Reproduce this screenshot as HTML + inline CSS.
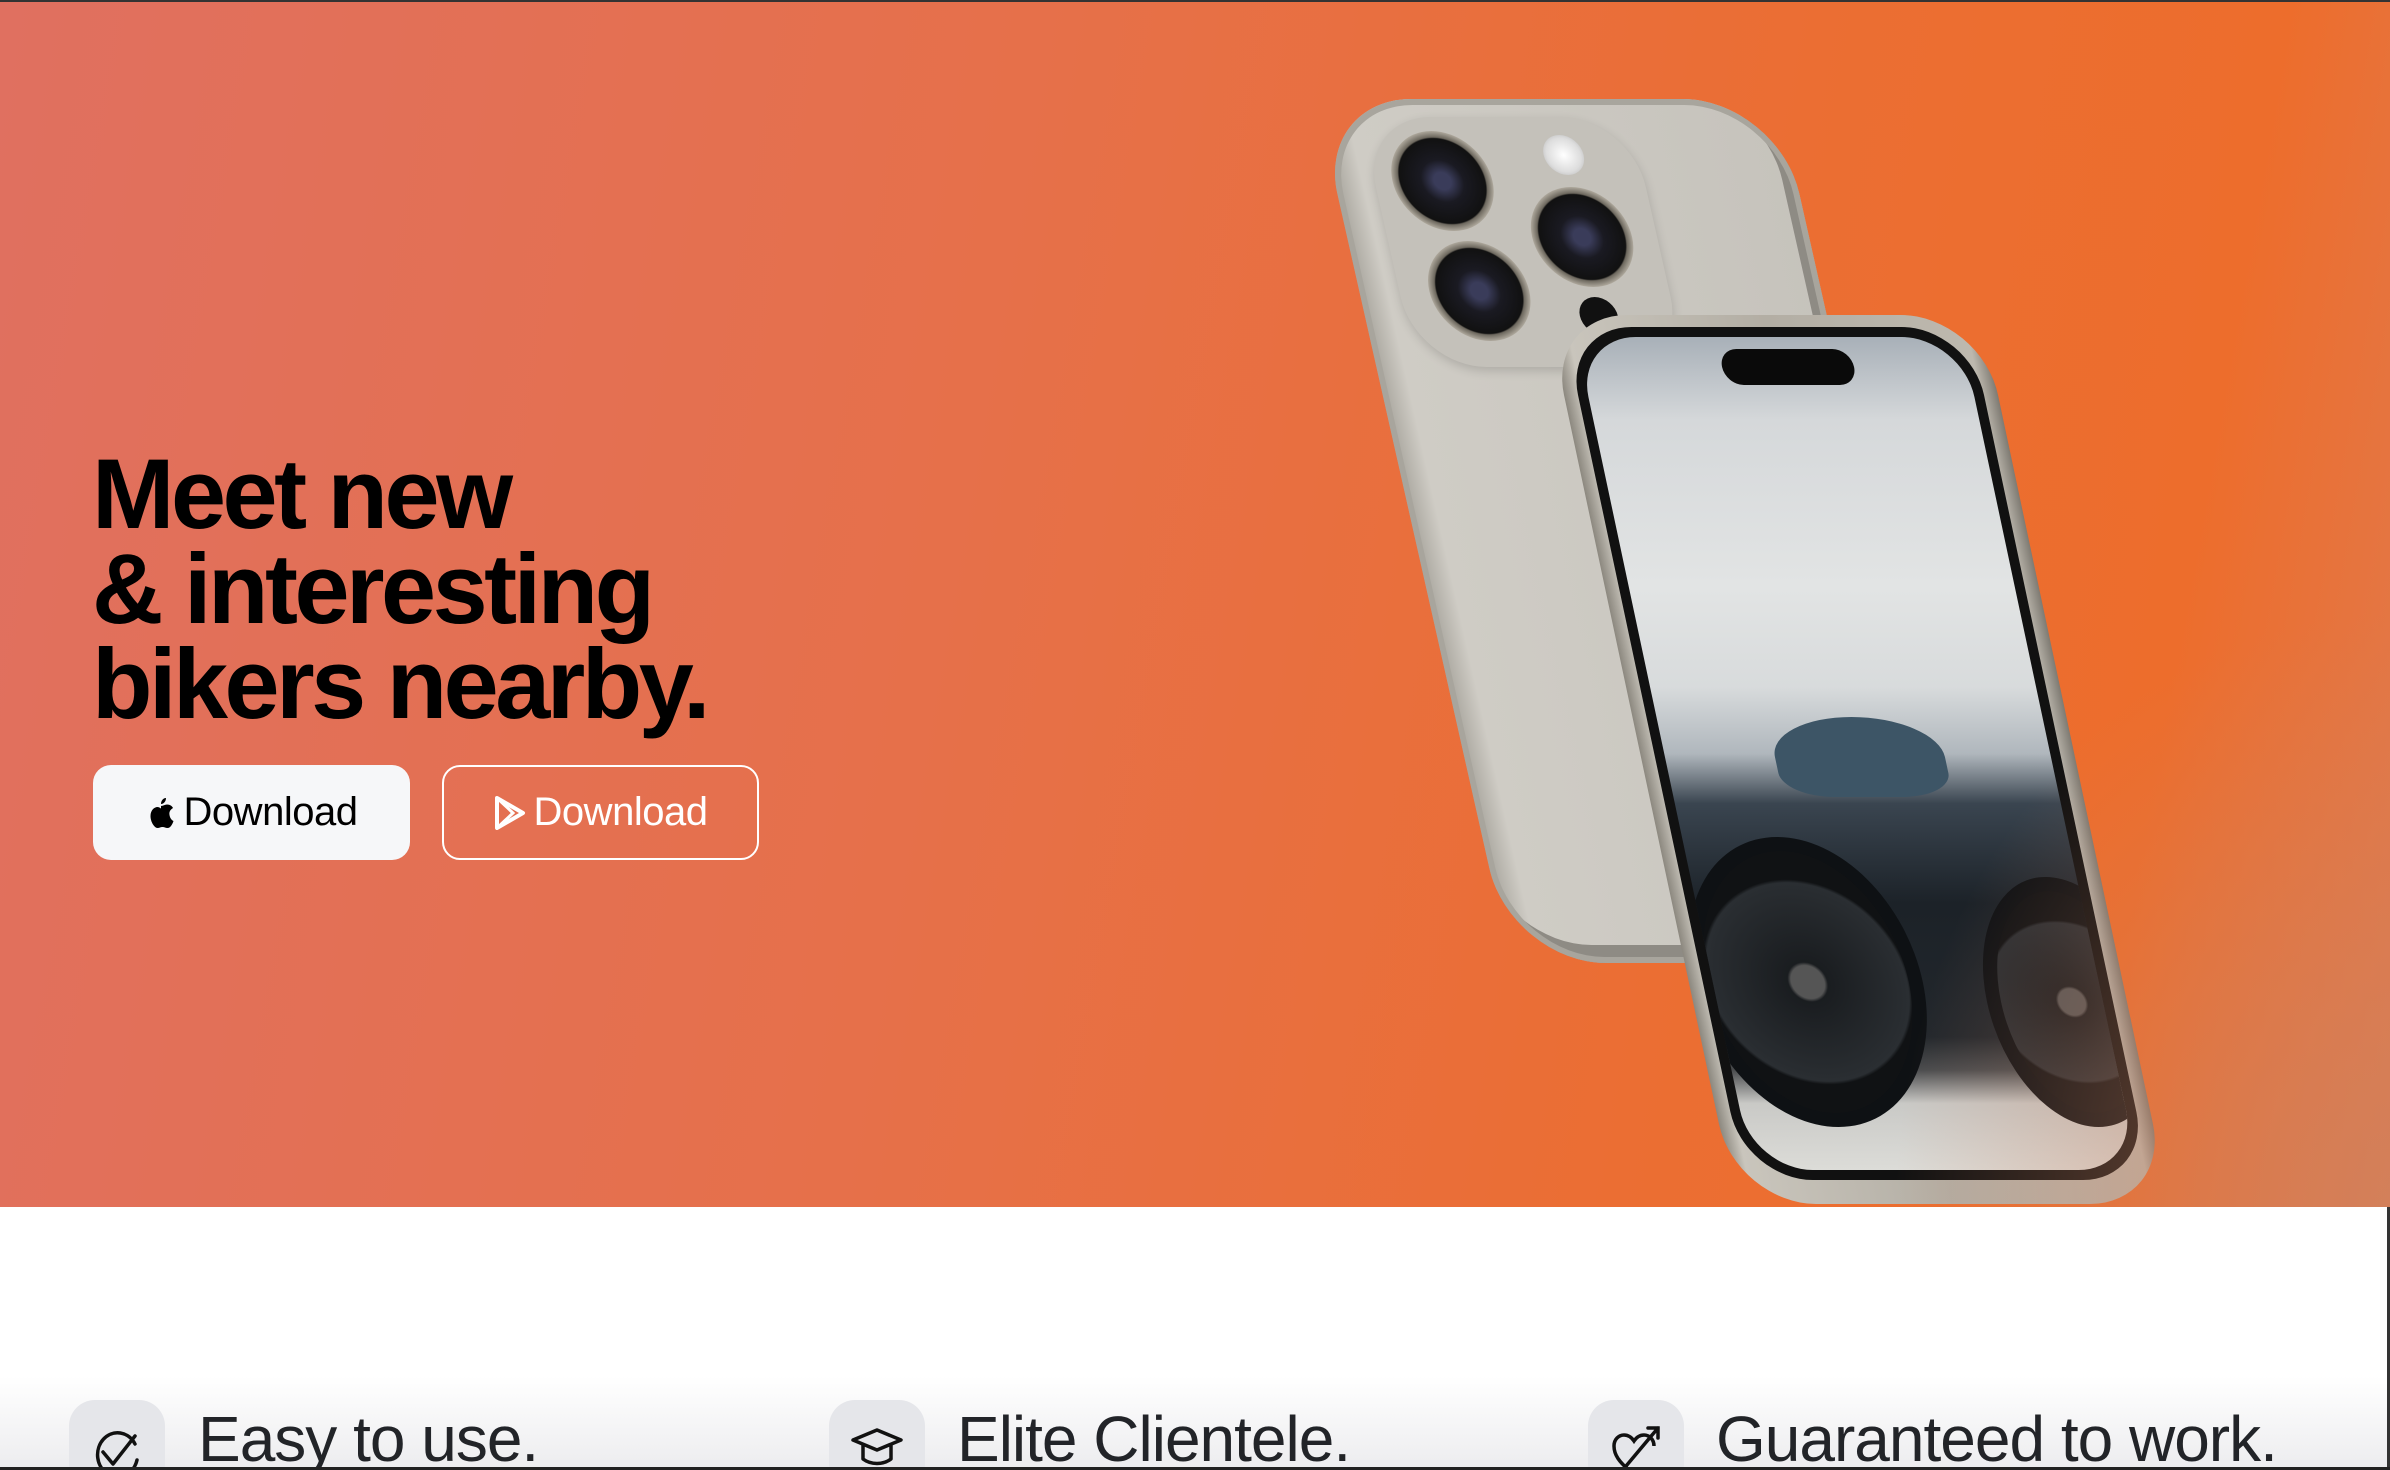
<!DOCTYPE html>
<html><head><meta charset="utf-8"><style>
*{margin:0;padding:0;box-sizing:border-box}
html,body{width:2390px;height:1470px;overflow:hidden;background:#fff;font-family:"Liberation Sans",Arial,sans-serif}
#w{position:relative;width:2390px;height:1470px;overflow:hidden}
.hero{position:absolute;left:0;top:0;width:2390px;height:1207px;background:linear-gradient(100deg,#e07060 0%,#e6704a 40%,#eb6e33 70%,#ed6d2c 88%,#e07a4e 100%);overflow:hidden}
.hero:after{content:"";position:absolute;right:0;bottom:0;width:500px;height:600px;background:radial-gradient(ellipse at 100% 100%,rgba(205,130,95,.7),rgba(205,130,95,0) 70%)}
h1{position:absolute;left:92px;top:446px;font-size:99px;line-height:95px;font-weight:bold;letter-spacing:-3.5px;color:#000}
.btn{position:absolute;top:765px;height:95px;width:317px;border-radius:18px;font-size:40px;display:flex;align-items:center;justify-content:center;gap:8px;letter-spacing:-.5px}
.b1{left:93px;background:#f6f7f9;color:#000}
.b2{left:442px;border:2px solid #fff;color:#fff}
.phone{position:absolute;transform-origin:0 0}
.back{left:1316px;top:99px;width:462px;height:864px;border-radius:95px;background:linear-gradient(90deg,#a9a69e 0%,#cfccc5 6%,#cbc8c1 50%,#c6c3bc 100%);transform:skewX(12.7deg);box-shadow:inset 0 0 0 6px #a8a59d,inset -10px -14px 0 4px #8e8b84}
.cam{position:absolute;left:40px;top:18px;width:270px;height:250px;border-radius:70px;background:#c4c1ba;box-shadow:0 4px 10px rgba(0,0,0,.15)}
.lens{position:absolute;width:100px;height:100px;border-radius:50%;background:radial-gradient(circle,#3a3c5a 0 12%,#1a1a22 30%,#111 60%,#6d685e 62%,#b8b2a6 72%,#6a665e 80%)}
.front{left:1547px;top:315px;width:434px;height:889px;border-radius:80px;background:linear-gradient(90deg,#8c887f,#c9c5bc 4%,#b3aea4 50%,#bdb8ae 96%,#7e7a72);transform:skewX(12deg)}
.scr{position:absolute;left:14px;top:12px;right:14px;bottom:24px;border-radius:68px;background:#111;padding:10px}
.img{position:relative;width:100%;height:100%;border-radius:60px;overflow:hidden;background:linear-gradient(180deg,#a8b0b8 0%,#d5d8da 10%,#e2e4e4 30%,#d8dbdc 42%,#b0b7bd 50%,#3a4550 56%,#1c2228 68%,#22272c 84%,#4a4c4e 88%,#c9c9c6 92%,#dcdcd8 100%)}
.wh{position:absolute;border-radius:50%;border:14px solid #0e1114;background:radial-gradient(circle,#555 0 10%,#1a1d20 12%,#2a2e32 60%,#101214 62%)}
.isl{position:absolute;left:150px;top:22px;width:132px;height:36px;border-radius:18px;background:#0a0a0a}
.sec{position:absolute;left:0;top:1207px;width:2390px;height:263px;background:linear-gradient(180deg,#fff 0%,#fff 65%,#ededef 100%);border-right:3px solid #333;border-bottom:3px solid #222}
.ib{position:absolute;top:1400px;width:96px;height:90px;border-radius:26px;background:#e5e6ea}
.ft{position:absolute;top:1402px;font-size:64px;color:#222428;letter-spacing:-1px;white-space:nowrap}
</style></head><body><div id="w">
<div class="hero">
<h1>Meet new<br>&amp; interesting<br>bikers nearby.</h1>
<div class="btn b1"><svg width="30" height="34" viewBox="0 0 30 34"><path d="M20 2c0 3-2 6-5 6 0-3 2-6 5-6zM15 10c2 0 4-1.5 6-1.5 3 0 5 1.5 6 3.5-3 2-4 4-3.5 7 .5 3 2 5 4 6-1 3-3 7-6 7-2 0-3-1-5-1s-3 1-5 1c-3 0-7-6-7-12 0-6 4-9 7-9 2 0 3 1.5 3.5 1.5z" fill="#000"/></svg>Download</div>
<div class="btn b2"><svg width="32" height="34" viewBox="0 0 32 34"><path d="M3 2l26 15L3 32z" fill="none" stroke="#fff" stroke-width="4" stroke-linejoin="round"/><path d="M3 2l16 15L3 32" fill="none" stroke="#fff" stroke-width="3"/></svg>Download</div>
<div class="phone back"><div class="cam">
<div class="lens" style="left:18px;top:14px"></div>
<div class="lens" style="left:145px;top:70px"></div>
<div class="lens" style="left:30px;top:124px"></div>
<div style="position:absolute;left:175px;top:18px;width:40px;height:40px;border-radius:50%;background:radial-gradient(#fff,#ddd 60%,#aaa)"></div>
<div style="position:absolute;left:175px;top:180px;width:38px;height:38px;border-radius:50%;background:#111"></div>
</div></div>
<div class="phone front"><div class="scr"><div class="img">
<div class="wh" style="left:-20px;top:500px;width:230px;height:290px"></div>
<div class="wh" style="left:270px;top:540px;width:170px;height:250px"></div>
<div style="position:absolute;left:110px;top:380px;width:170px;height:80px;border-radius:50% 50% 30% 30%;background:#3d5566"></div>
</div><div class="isl"></div></div></div>
</div>
<div class="sec"></div>
<div class="ib" style="left:69px"><svg style="position:absolute;left:22px;top:24px" width="52" height="60" viewBox="0 0 52 60"><path d="M44 20A20 22 0 1 0 46 36" fill="none" stroke="#111" stroke-width="3.5" stroke-linecap="round"/><path d="M12 28l10 12L44 12" fill="none" stroke="#111" stroke-width="3.5" stroke-linecap="round" stroke-linejoin="round"/></svg></div>
<div class="ft" style="left:198px">Easy to use.</div>
<div class="ib" style="left:829px"><svg style="position:absolute;left:20px;top:26px" width="56" height="50" viewBox="0 0 56 50"><path d="M4 14L28 4l24 10-24 10z M14 19v14c8 6 20 6 28 0V19" fill="none" stroke="#111" stroke-width="3.5" stroke-linejoin="round"/></svg></div>
<div class="ft" style="left:957px">Elite Clientele.</div>
<div class="ib" style="left:1588px"><svg style="position:absolute;left:20px;top:20px" width="58" height="60" viewBox="0 0 58 60"><path d="M26 54C10 42 6 34 6 26c0-7 5-11 10-11 5 0 8 3 10 6 2-3 5-6 10-6 5 0 10 4 10 11" fill="none" stroke="#111" stroke-width="3.5"/><path d="M8 58L50 8M40 8h10v10" fill="none" stroke="#111" stroke-width="3.5" stroke-linecap="round"/></svg></div>
<div class="ft" style="left:1716px">Guaranteed to work.</div>
<div style="position:absolute;left:0;top:0;width:2390px;height:2px;background:#333"></div>
<div style="position:absolute;left:0;top:1467px;width:2390px;height:3px;background:#222"></div>
</div></body></html>
